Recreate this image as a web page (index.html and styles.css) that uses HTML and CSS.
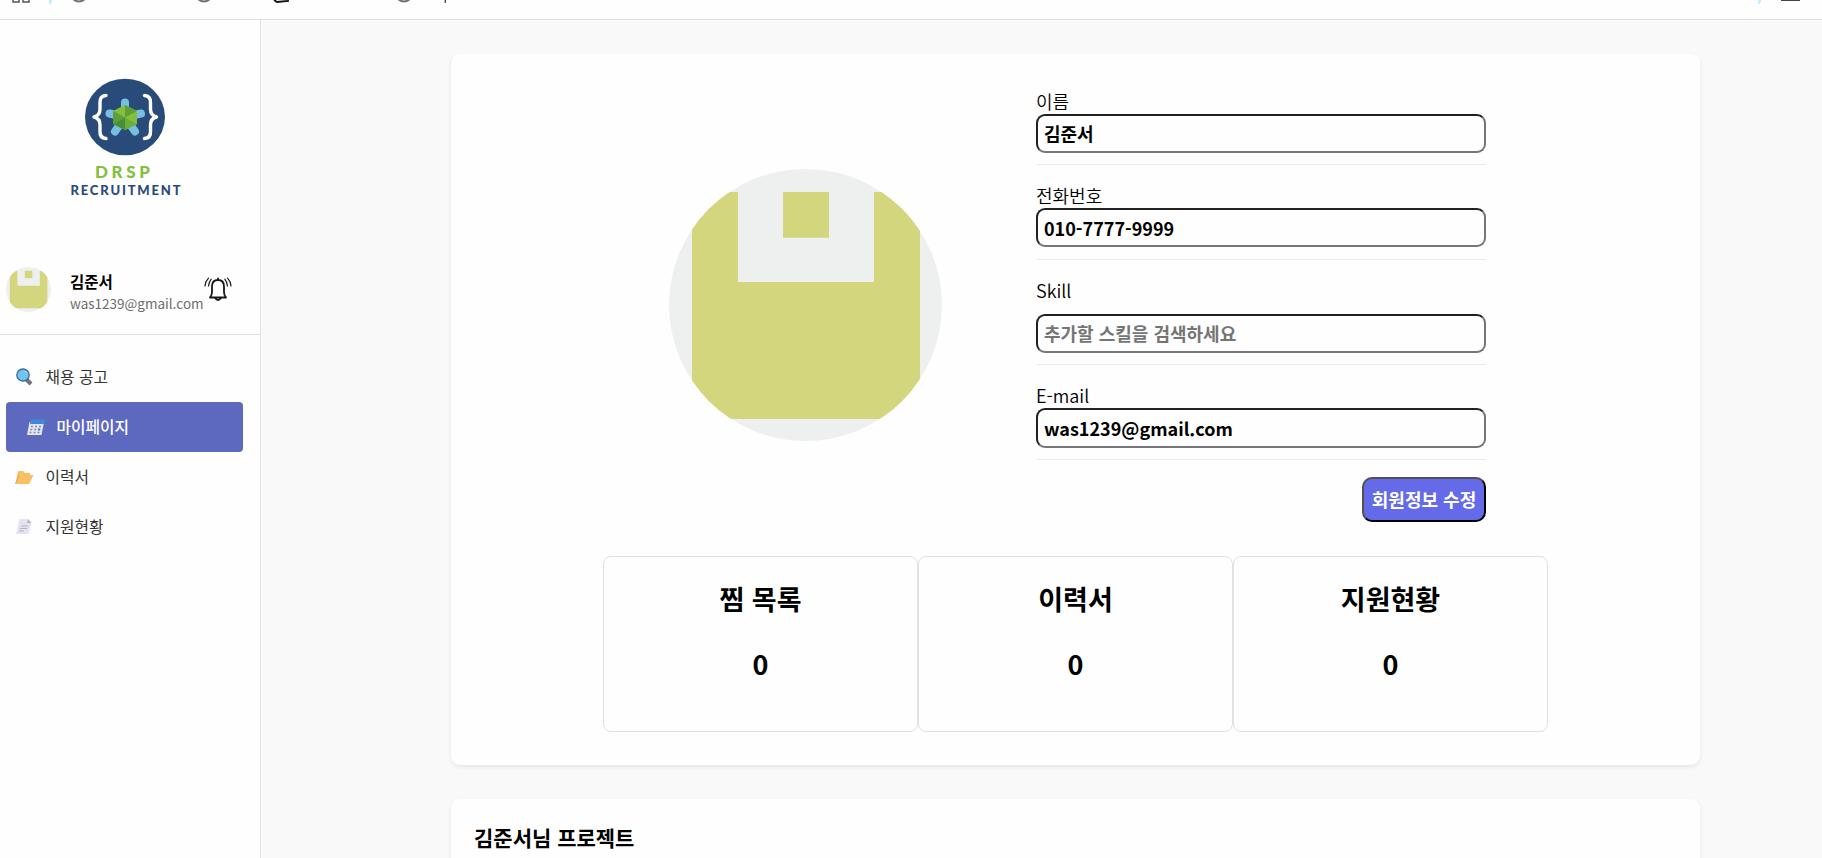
FILE: index.html
```
<!DOCTYPE html>
<html lang="ko">
<head>
<meta charset="utf-8">
<title>DRSP Recruitment</title>
<link rel="stylesheet" href="styles.css">
</head>
<body>
<svg class="topbar" viewBox="0 0 1822 19" fill="none">
  <path d="M13 0V2H19V0M23 0V2H29V0" stroke="#555" stroke-width="1.5"/>
  <path d="M49 0H52V2H51V4H49ZM1758 0H1761V2H1760V4H1758Z" fill="#c5ecfa"/>
  <g stroke="#777172" stroke-width="2"><path d="M73 -1Q79 4 85 -1M198 -1Q204 4 210 -1M398 -1Q404 4 410 -1"/></g>
  <path d="M274 0L277 2L288 1V0" stroke="#111" stroke-width="1.8"/>
  <path d="M444.5 0V3" stroke="#eab54e"/><path d="M445.5 0V3" stroke="#245986"/>
  <path d="M1781 .3H1800" stroke="#484347" stroke-width="1.4"/>
</svg>
<div class="layout">
  <aside class="sidebar">
    <svg class="logo" viewBox="0 0 150 150">
      <ellipse cx="75" cy="57" rx="40" ry="38.3" fill="#294b79"/>
      <g fill="none" stroke="#fff" stroke-width="3.4" stroke-linecap="round" stroke-linejoin="round">
        <path d="M56 35.5Q49.5 36 50 43V49Q50 55.500 44 57Q50 58.500 50 65V71Q49.500 78 56 78.500"/>
        <path d="M94.500 35.500Q101 36 100.500 43V49Q100.500 55.500 106.500 57Q100.500 58.500 100.500 65V71Q101 78 94.500 78.500"/>
      </g>
      <g stroke="#78bde2" stroke-width="8" stroke-linecap="round"><path d="M75 57V42.500M75 57L59.500 53.500M75 57L91 53.500M75 57L65 71.500M75 57L85 71.500"/></g>
      <path d="M75 45L87 51V64L75 70L63 64V51Z" fill="#83bf3f"/>
      <path d="M75 57.500V45L87 51ZM75 57.500L63 51V64Z" fill="#5ca036"/>
      <path d="M75 57.500L87 64L75 70Z" fill="#69ad3a"/>
      <path d="M75 57.500V70L63 64Z" fill="#468f38"/>
      <text class="logo-name" x="45" y="117.800" textLength="55" fill="#83bf3f">DRSP</text>
      <text class="logo-sub" x="20.500" y="134.700" textLength="110" fill="#294b79">RECRUITMENT</text>
    </svg>
    <section class="profile">
      <svg class="avatar" viewBox="0 0 273 273"><use href="#identicon"/></svg>
      <div class="who"><div class="name">김준서</div><div class="mail">was1239@gmail.com</div></div>
      <svg class="bell" viewBox="0 0 28 24" fill="none" stroke="#17171b" stroke-width="1.8" stroke-linecap="round" stroke-linejoin="round">
        <path d="M6 20.500Q8 18.500 8 15V9.500C8 5 10.500 3 14 3S20 5 20 9.500V15Q20 18.500 22 20.500ZM14 2.700V1.500M11 21Q14 25 17 21"/>
        <path d="M4.500 9Q5 5 7.200 2.200M1 9Q1.300 4.500 4.500 1.200M23.500 9Q23 5 20.800 2.200M27 9Q26.700 4.500 23.500 1.200" stroke-width="1.200"/>
      </svg>
    </section>
    <nav class="menu">
      <a class="item"><svg class="icon" viewBox="0 0 20 18"><path d="M11 11L16 16" stroke="#746e7d" stroke-width="4"/><ellipse cx="8" cy="7" rx="6.200" ry="6" fill="#72c3ee" stroke="#356b9e" stroke-width="1.300"/><path d="M10 3L11.500 4.500" stroke="#c9efff"/></svg><span>채용 공고</span></a>
      <a class="item active"><svg class="icon" viewBox="0 0 20 18"><path d="M3.500 4H18L15.500 17H1Z" fill="#e4e5f2"/><path d="M4 6L5 1.500H17Q20 1 19 4L17.500 6Z" fill="#4086dd"/><path d="M5 8.500H15M4.300 11.500H14.500M3.500 14.500H13.500" stroke="#8c8e9e" stroke-width="1.700" stroke-dasharray="2 2"/><path d="M12 11.500H14" stroke="#3688e4" stroke-width="2"/></svg><span>마이페이지</span></a>
      <a class="item"><svg class="icon" viewBox="0 0 20 18"><path d="M.5 16L3 3H8L10 5H15V7H18.500L14 16Z" fill="#f8bf64"/><path d="M.5 15.500L4 7" stroke="#e6a74d"/></svg><span>이력서</span></a>
      <a class="item"><svg class="icon" viewBox="0 0 20 18"><path d="M4.500 1H13L16.500 5L13.500 16H1Z" fill="#e4e3ef"/><path d="M13 1L12 5H16.500Z" fill="#b8b5c0"/><path d="M6 8H13M5 10.500H12M4 13H9" stroke="#b5b3bd"/></svg><span>지원현황</span></a>
    </nav>
  </aside>
  <main class="content">
    <section class="card account">
      <div class="details">
        <svg class="portrait" viewBox="0 0 273 273" preserveAspectRatio="none">
          <defs><clipPath id="round"><circle cx="136.500" cy="136.500" r="136.500"/></clipPath></defs>
          <g id="identicon" clip-path="url(#round)">
            <path d="M0 0H273V273H0Z" fill="#eef0f0"/>
            <path d="M23 23H69V113.500H205V23H251V251H23ZM114 23H160V69H114Z" fill="#d3d67d"/>
          </g>
        </svg>
        <form class="form">
          <div class="field"><label>이름</label><input value="김준서"></div>
          <div class="field phone"><label>전화번호</label><input value="010-7777-9999"></div>
          <div class="field skill"><label>Skill</label><input placeholder="추가할 스킬을 검색하세요"></div>
          <div class="field email"><label>E-mail</label><input value="was1239@gmail.com"></div>
          <button class="edit" type="button">회원정보 수정</button>
        </form>
      </div>
      <div class="stats">
        <div class="stat"><span>찜 목록</span><span>0</span></div>
        <div class="stat"><span>이력서</span><span>0</span></div>
        <div class="stat"><span>지원현황</span><span>0</span></div>
      </div>
    </section>
    <section class="card projects"><h2>김준서님 프로젝트</h2></section>
  </main>
</div>
</body>
</html>
```
FILE: styles.css
```
* { box-sizing: border-box; }
body { margin: 0; height: 858px; overflow: hidden; background: #f9f9f9; color: #000; font-family: "Noto Sans CJK KR", sans-serif; font-size: 18px; }
.topbar { display: block; width: 1822px; height: 20px; background: #fefefe; border-bottom: 1px solid #dfe0e3; }
.layout { display: flex; height: 838px; overflow: hidden; }
.sidebar { width: 261px; flex: none; background: #fefefe; border-right: 1px solid #dee2e8; }
.logo { display: block; width: 150px; height: 150px; margin: 40px 0 0 50px; }
.logo text { font-family: Lato, sans-serif; font-weight: 900; }
.logo-name { font-size: 17px; }
.logo-sub { font-size: 13px; }
.profile { display: flex; height: 125px; padding: 57px 0 0 6px; border-bottom: 1px solid #dee0e9; }
.avatar { width: 45px; height: 45px; flex: none; }
.who { width: 134px; margin: 2px 0 0 19px; white-space: nowrap; }
.name { font-size: 15.5px; font-weight: 700; line-height: 24px; }
.mail { font-size: 13.5px; line-height: 20px; color: #6d6d6d; }
.bell { width: 28px; height: 24px; margin-top: 10px; flex: none; }
.menu { padding: 17px 17px 0 6px; }
.item { display: flex; align-items: center; gap: 10.5px; height: 50px; padding-left: 9px; font-size: 15.75px; color: #333; }
.item span { padding-bottom: 2px; }
.active { background: #5d69be; color: #fff; border-radius: 4px; padding-left: 20px; font-weight: 500; }
.icon { width: 20px; height: 18px; flex: none; }
.content { flex: 1; padding: 34px 122px 0 190px; }
.card { background: #fefefe; border-radius: 9px; box-shadow: 0 2px 4px #00000014; }
.account { height: 711px; padding: 35px 0 0 152px; }
.details { display: flex; height: 467px; }
.portrait { width: 273px; height: 272px; margin: 80px 94px 0 66px; flex: none; }
.form { width: 450px; }
.field { display: flex; flex-direction: column; border-bottom: 1px solid #ececec; height: 76px; }
.field label { line-height: 25px; height: 25px; flex: none; font-weight: 350; }
.field input { width: 450px; height: 39px; padding: 0 6px 1px; border: 2px solid; border-color: #212121 #767679 #767679 #212121; border-radius: 9px; background: #fefefe; color: #000; font: 700 18px "Noto Sans CJK KR", sans-serif; outline: 0; }
.field input::placeholder { color: #757575; }
.phone { height: 77px; margin-top: 18px; }
.phone input { padding: 1px 6px 0; }
.skill { height: 87px; margin-top: 18px; }
.skill label { margin-bottom: 11px; }
.email { height: 77px; margin-top: 18px; }
.email input { height: 40px; }
.edit { display: block; width: 124px; height: 45px; margin: 17px 0 0 auto; padding: 0 0 2px; border: 2px solid; border-color: #505050 #000 #000 #505050; border-radius: 10px; background: #646ae8; color: #fff; font: 700 18px "Noto Sans CJK KR", sans-serif; }
.stats { display: flex; width: 945px; }
.stat { display: flex; flex-direction: column; align-items: center; gap: 25px; width: 315px; height: 176px; padding-top: 22px; border: 1px solid #dee2e6; border-radius: 8px; font-size: 27px; font-weight: 700; line-height: 40px; }
.projects { height: 200px; margin-top: 34px; padding: 22px 23px; }
.projects h2 { margin: 0; font-size: 21px; font-weight: 700; line-height: 32px; }
```
